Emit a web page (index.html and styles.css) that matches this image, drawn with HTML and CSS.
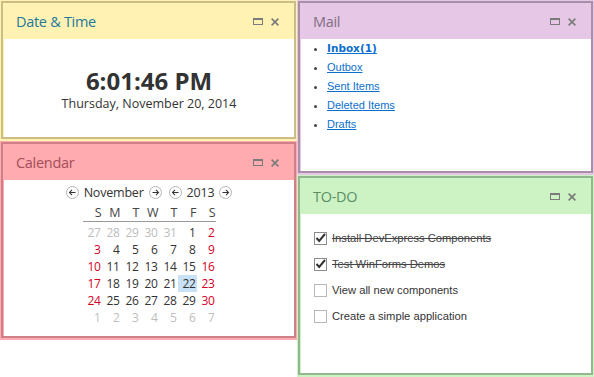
FILE: index.html
```html
<!DOCTYPE html>
<html lang="en">
  <head>
    <meta charset="UTF-8" />
    <title>Dashboard tiles</title>
    <link rel="stylesheet" href="styles.css">
  </head>
  <body>
    <div class="board">
      <div class="col">
        <!-- Date & Time -->
        <section class="tile tile-date">
          <div class="tile-frame">
            <header class="tile-head">
              <span class="tile-title">Date &amp; Time</span>
              <span class="tile-tools">
                <svg class="ic-max" width="10" height="7" viewBox="0 0 10 7"><rect x="0.5" y="0.5" width="9" height="6" fill="none" stroke="currentColor"/><rect x="0" y="0" width="10" height="2" fill="currentColor"/></svg>
                <svg class="ic-close" width="8" height="8" viewBox="0 0 8 8"><path d="M0.6 0.6L7.4 7.4M7.4 0.6L0.6 7.4" stroke="currentColor" stroke-width="1.6"/></svg>
              </span>
            </header>
            <div class="tile-body clock">
              <div class="clock-time">6:01:46 PM</div>
              <div class="clock-date">Thursday, November 20, 2014</div>
            </div>
          </div>
        </section>

        <!-- Calendar -->
        <section class="tile tile-cal">
          <div class="tile-frame">
            <header class="tile-head">
              <span class="tile-title">Calendar</span>
              <span class="tile-tools">
                <svg class="ic-max" width="10" height="7" viewBox="0 0 10 7"><rect x="0.5" y="0.5" width="9" height="6" fill="none" stroke="currentColor"/><rect x="0" y="0" width="10" height="2" fill="currentColor"/></svg>
                <svg class="ic-close" width="8" height="8" viewBox="0 0 8 8"><path d="M0.6 0.6L7.4 7.4M7.4 0.6L0.6 7.4" stroke="currentColor" stroke-width="1.6"/></svg>
              </span>
            </header>
            <div class="tile-body cal">
              <div class="cal-nav">
                <svg class="nav-btn" width="13" height="13" viewBox="0 0 13 13"><circle cx="6.5" cy="6.5" r="6" fill="#fff" stroke="#b4b4b4"/><path d="M3.5 6.5H9.5M6 3.8L3.5 6.5L6 9.2" fill="none" stroke="#333" stroke-width="1.1"/></svg>
                <span class="cal-month">November</span>
                <svg class="nav-btn" width="13" height="13" viewBox="0 0 13 13"><circle cx="6.5" cy="6.5" r="6" fill="#fff" stroke="#b4b4b4"/><path d="M3.5 6.5H9.5M7 3.8L9.5 6.5L7 9.2" fill="none" stroke="#333" stroke-width="1.1"/></svg>
                <svg class="nav-btn nav-gap" width="13" height="13" viewBox="0 0 13 13"><circle cx="6.5" cy="6.5" r="6" fill="#fff" stroke="#b4b4b4"/><path d="M3.5 6.5H9.5M6 3.8L3.5 6.5L6 9.2" fill="none" stroke="#333" stroke-width="1.1"/></svg>
                <span class="cal-year">2013</span>
                <svg class="nav-btn" width="13" height="13" viewBox="0 0 13 13"><circle cx="6.5" cy="6.5" r="6" fill="#fff" stroke="#b4b4b4"/><path d="M3.5 6.5H9.5M7 3.8L9.5 6.5L7 9.2" fill="none" stroke="#333" stroke-width="1.1"/></svg>
              </div>
              <div class="cal-head">
                <span>S</span><span>M</span><span>T</span><span>W</span><span>T</span><span>F</span><span>S</span>
              </div>
              <div class="cal-grid">
                <span class="off">27</span><span class="off">28</span><span class="off">29</span><span class="off">30</span><span class="off">31</span><span>1</span><span class="we">2</span>
                <span class="we">3</span><span>4</span><span>5</span><span>6</span><span>7</span><span>8</span><span class="we">9</span>
                <span class="we">10</span><span>11</span><span>12</span><span>13</span><span>14</span><span>15</span><span class="we">16</span>
                <span class="we">17</span><span>18</span><span>19</span><span>20</span><span>21</span><span class="sel">22</span><span class="we">23</span>
                <span class="we">24</span><span>25</span><span>26</span><span>27</span><span>28</span><span>29</span><span class="we">30</span>
                <span class="off">1</span><span class="off">2</span><span class="off">3</span><span class="off">4</span><span class="off">5</span><span class="off">6</span><span class="off">7</span>
              </div>
            </div>
          </div>
        </section>
      </div>

      <div class="col">
        <!-- Mail -->
        <section class="tile tile-mail">
          <div class="tile-frame">
            <header class="tile-head">
              <span class="tile-title">Mail</span>
              <span class="tile-tools">
                <svg class="ic-max" width="10" height="7" viewBox="0 0 10 7"><rect x="0.5" y="0.5" width="9" height="6" fill="none" stroke="currentColor"/><rect x="0" y="0" width="10" height="2" fill="currentColor"/></svg>
                <svg class="ic-close" width="8" height="8" viewBox="0 0 8 8"><path d="M0.6 0.6L7.4 7.4M7.4 0.6L0.6 7.4" stroke="currentColor" stroke-width="1.6"/></svg>
              </span>
            </header>
            <div class="tile-body">
              <ul class="mail-list">
                <li><a href="#" class="unread">Inbox(1)</a></li>
                <li><a href="#">Outbox</a></li>
                <li><a href="#">Sent Items</a></li>
                <li><a href="#">Deleted Items</a></li>
                <li><a href="#">Drafts</a></li>
              </ul>
            </div>
          </div>
        </section>

        <!-- TO-DO -->
        <section class="tile tile-todo">
          <div class="tile-frame">
            <header class="tile-head">
              <span class="tile-title">TO-DO</span>
              <span class="tile-tools">
                <svg class="ic-max" width="10" height="7" viewBox="0 0 10 7"><rect x="0.5" y="0.5" width="9" height="6" fill="none" stroke="currentColor"/><rect x="0" y="0" width="10" height="2" fill="currentColor"/></svg>
                <svg class="ic-close" width="8" height="8" viewBox="0 0 8 8"><path d="M0.6 0.6L7.4 7.4M7.4 0.6L0.6 7.4" stroke="currentColor" stroke-width="1.6"/></svg>
              </span>
            </header>
            <div class="tile-body todo">
              <div class="todo-item done"><span class="check"><svg width="11" height="10" viewBox="0 0 11 10"><path d="M1.5 5L4.2 8L10 1" fill="none" stroke="#333" stroke-width="2"/></svg></span><span>Install DevExpress Components</span></div>
              <div class="todo-item done"><span class="check"><svg width="11" height="10" viewBox="0 0 11 10"><path d="M1.5 5L4.2 8L10 1" fill="none" stroke="#333" stroke-width="2"/></svg></span><span>Test WinForms Demos</span></div>
              <div class="todo-item"><span class="check"></span><span>View all new components</span></div>
              <div class="todo-item"><span class="check"></span><span>Create a simple application</span></div>
            </div>
          </div>
        </section>
      </div>
    </div>
  </body>
</html>
```

FILE: styles.css
```css
* {
  padding: 0;
  margin: 0;
  box-sizing: border-box;
}

body {
  background-color: #fff;
  font-family: "Open Sans", "Noto Sans", sans-serif;
  color: #333;
}

.board {
  display: flex;
}

.col {
  width: 297px;
  display: flex;
  flex-direction: column;
}

/* khung chung cho moi o */
.tile {
  --tile-bg: #fff2b2;
  --tile-border: #cbbd86;
  --tile-title: #23789f;

  background-color: var(--tile-bg);
  padding: 1px 1px 2px 1px;
}

.tile-date { height: 141px; }
.tile-cal {
  height: 199px;
  --tile-bg: #ffabb0;
  --tile-border: #cf7f88;
  --tile-title: #a54d59;
}
.tile-mail {
  height: 175px;
  --tile-bg: #e6c7e5;
  --tile-border: #a68fa7;
  --tile-title: #7e6f86;
}
.tile-todo {
  height: 202px;
  --tile-bg: #cdf3c4;
  --tile-border: #8fb88f;
  --tile-title: #5b8e66;
}

.tile-frame {
  height: 100%;
  border: 2px solid var(--tile-border);
  display: flex;
  flex-direction: column;
}

.tile-head {
  height: 36px;
  flex: none;
  display: flex;
  align-items: center;
  justify-content: space-between;
  padding: 0 15px 0 13px;
}

.tile-title {
  font-size: 14.5px;
  color: var(--tile-title);
  letter-spacing: -0.3px;
}

.tile-tools {
  display: flex;
  align-items: center;
  gap: 8px;
  color: #7b7b7b;
}

.ic-close {
  margin-top: 1px;
}

.tile-body {
  flex: 1;
  background-color: #fff;
  margin-left: 1px;
}

/* dong ho */
.clock {
  display: flex;
  flex-direction: column;
  align-items: center;
  justify-content: center;
  padding-top: 4px;
}

.clock-time {
  font-size: 24px;
  font-weight: 700;
  line-height: 26px;
  color: #333;
}

.clock-date {
  margin-top: 2px;
  font-size: 12.5px;
  line-height: 16px;
  color: #333;
}

/* lich */
.cal {
  padding-top: 6px;
  display: flex;
  flex-direction: column;
  align-items: center;
  font-size: 12px;
}

.cal-nav {
  display: flex;
  align-items: center;
  gap: 5px;
  height: 13px;
  line-height: 13px;
  color: #333;
}

.nav-gap {
  margin-left: 2px;
}

.cal-month,
.cal-year {
  font-size: 12.5px;
  letter-spacing: -0.2px;
}

.cal-head,
.cal-grid {
  display: grid;
  grid-template-columns: repeat(7, 19px);
}

.cal-head {
  margin-top: 5px;
  height: 18px;
  line-height: 17px;
  border-bottom: 1px solid #9a9a9a;
  color: #444;
  font-size: 12.5px;
}

.cal-head span {
  text-align: right;
}

.cal-grid {
  margin-top: 2px;
  grid-auto-rows: 17px;
  line-height: 17px;
  font-size: 12px;
  letter-spacing: -0.3px;
}

.cal-grid span {
  text-align: right;
  padding-right: 1px;
}

.cal-grid .we { color: #d3001f; }
.cal-grid .off { color: #bdbdbd; }
.cal-grid .sel {
  background-color: #c9e1f5;
}

/* thu */
.mail-list {
  list-style: disc;
  padding: 0 0 0 26px;
  font-family: "Liberation Sans", Arial, sans-serif;
  font-size: 11px;
  line-height: 19px;
  color: #444;
}

.mail-list a {
  color: #0b6fce;
}

.mail-list .unread {
  font-family: "DejaVu Sans", sans-serif;
  font-weight: 700;
  font-size: 10.5px;
}

/* viec can lam */
.todo {
  padding: 11px 0 0 13px;
  font-family: "Liberation Sans", Arial, sans-serif;
  font-size: 11.2px;
  color: #333;
}

.todo-item {
  height: 26px;
  display: flex;
  align-items: center;
  gap: 5px;
}

.todo-item.done span:last-child {
  text-decoration: line-through;
  color: #444;
}

.check {
  width: 13px;
  height: 13px;
  border: 1px solid #b8b8b8;
  background-color: #fff;
  display: flex;
  align-items: center;
  justify-content: center;
}

.done .check {
  border-color: #8c8c8c;
}
```
